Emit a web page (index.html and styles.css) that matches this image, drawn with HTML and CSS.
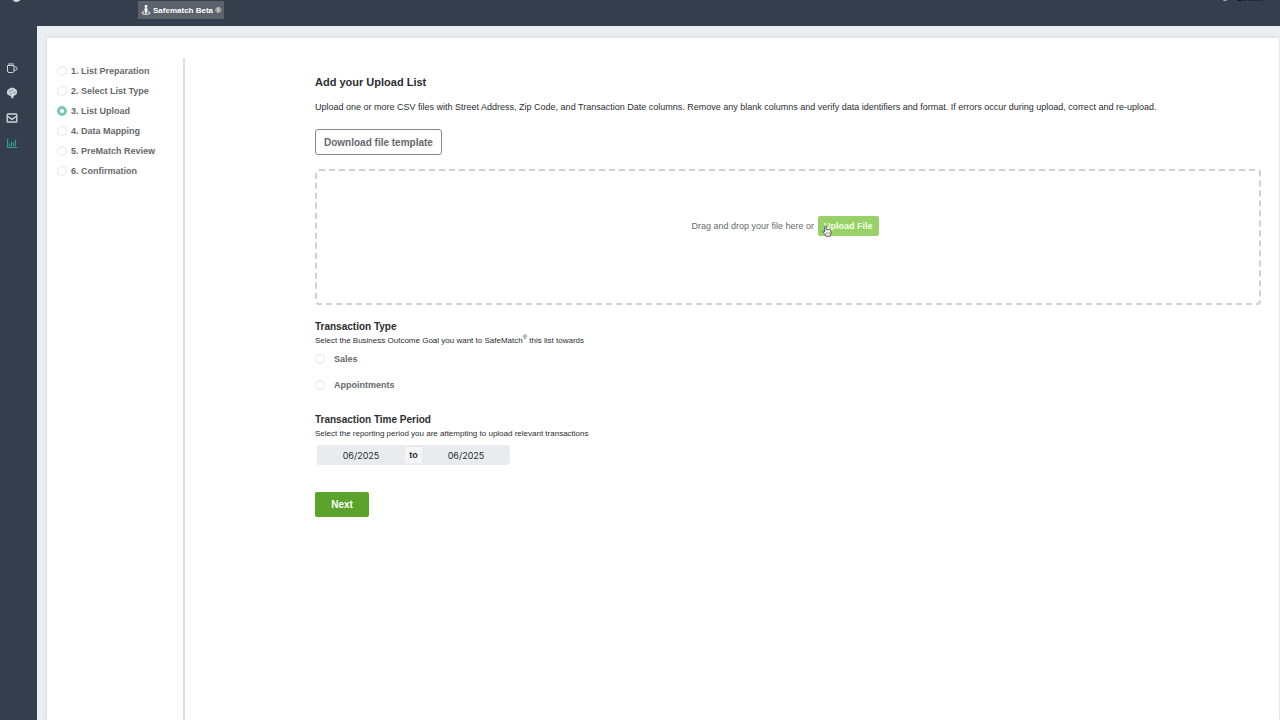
FILE: index.html
```
<!DOCTYPE html>
<html lang="en">
<head>
    <meta charset="UTF-8">
    <meta name="viewport" content="width=device-width, initial-scale=1.0">
    <title>Safematch - List Upload</title>
    <link rel="stylesheet" href="styles.css">
</head>
<body>
    <header class="topbar">
        <span class="brand-dot"></span>
        <a class="beta-link" href="#">
            <svg class="beta-icon" viewBox="0 0 12 12" aria-hidden="true">
                <circle cx="6" cy="1.800" r="1.700" fill="currentColor"/>
                <path d="M4.200 4h3.600v3L7.200 7.400V10H4.800V7.400L4.200 7z" fill="currentColor"/>
                <path d="M3.800 8C2 8.300 1 8.900 1 9.500 1 10.500 3.200 11.200 6 11.200s5-.7 5-1.700c0-.6-1-1.200-2.800-1.500" fill="none" stroke="currentColor" stroke-width="1.200"/>
            </svg>
            Safematch Beta ®
        </a>
        <div class="account">
            <span class="account-dot"></span>
            <span class="account-name">Brian</span>
        </div>
    </header>

    <div class="layout">
        <nav class="sidebar" aria-label="Main">
            <a href="#" aria-label="Home">
                <svg viewBox="0 0 12 12" aria-hidden="true">
                    <path d="M1.500 3.500h6.500v5.500q0 1.500-1.500 1.500h-3.500q-1.500 0-1.500-1.500zM8 4.800h1.500q1.500 0 1.500 1.400v.6q0 1.400-1.500 1.400H8M3 1v2M5 .8v2.200M7 1v2" fill="none" stroke="currentColor"/>
                </svg>
            </a>
            <a href="#" aria-label="Insights">
                <svg viewBox="0 0 12 12" aria-hidden="true">
                    <path d="M6 .8c1.500-.2 2.500.3 3.200 1.300C10.600 2.500 11.300 4 11 5.300c.2 1.700-.9 2.700-2.200 2.900L7.400 9.500v1.700H5.200V9.400L3 8.300C1.500 8 .8 6.800 1 5.400.8 3.700 1.600 2.500 3 2.100 3.700 1.200 4.700.6 6 .8z" fill="currentColor"/>
                    <path d="M3 4.500l2-.8M6.500 2.500v1.300M7.500 5.500h1.800M4 7h1.500" fill="none" stroke="#343e4d" stroke-width=".6"/>
                </svg>
            </a>
            <a href="#" aria-label="Messages">
                <svg viewBox="0 0 12 12" aria-hidden="true">
                    <rect x="1.200" y="2" width="9.600" height="8" rx=".8" fill="none" stroke="currentColor" stroke-width="1.400"/>
                    <path d="M1.500 4.200L6 7.400l4.500-3.200" fill="none" stroke="currentColor" stroke-width="1.400"/>
                </svg>
            </a>
            <a class="active" href="#" aria-label="Reports">
                <svg viewBox="0 0 12 12" aria-hidden="true">
                    <path d="M1.500 2v8.500h10M3.500 6.500v3M5.500 4.500v5M7.500 5.500v4M9.500 2.500v7" fill="none" stroke="currentColor" stroke-width="1.200"/>
                </svg>
            </a>
        </nav>

        <main class="card">
            <ol class="steps">
                <li><label><input type="radio" name="step"> 1. List Preparation</label></li>
                <li><label><input type="radio" name="step"> 2. Select List Type</label></li>
                <li><label><input type="radio" name="step" checked> 3. List Upload</label></li>
                <li><label><input type="radio" name="step"> 4. Data Mapping</label></li>
                <li><label><input type="radio" name="step"> 5. PreMatch Review</label></li>
                <li><label><input type="radio" name="step"> 6. Confirmation</label></li>
            </ol>

            <form class="upload-form">
                <h1>Add your Upload List</h1>
                <p class="intro">Upload one or more CSV files with Street Address, Zip Code, and Transaction Date columns. Remove any blank columns and verify data identifiers and format. If errors occur during upload, correct and re-upload.</p>
                <button class="btn-template" type="button">Download file template</button>

                <div class="dropzone">
                    <span>Drag and drop your file here or</span>
                    <button class="btn-upload" type="button">
                        Upload File
                        <svg class="pointer" viewBox="0 0 12 14" aria-hidden="true">
                            <path d="M3.200 7V2q0-1 .9-1t.9 1v3.500q.8-.8 1.500 0 .9-.6 1.500.2 1-.5 1.500.5 1.300-.3 1.300 1V9.500q0 1.500-1 2.500v1.300H4.600V12L1.200 8.300q-.6-.9.2-1.300.8-.3 1.800 1z" fill="#fff" stroke="#3a4048" stroke-linejoin="round"/>
                            <path d="M5.500 8.500v2.500M7.200 8.500v2.500M8.800 8.500v2.500" stroke="#3a4048" stroke-width=".6"/>
                        </svg>
                    </button>
                </div>

                <fieldset class="type-group">
                    <legend>Transaction Type</legend>
                    <p class="hint">Select the Business Outcome Goal you want to SafeMatch<sup>®</sup> this list towards</p>
                    <label><input type="radio" name="type"> Sales</label>
                    <label><input type="radio" name="type"> Appointments</label>
                </fieldset>

                <fieldset class="period-group">
                    <legend>Transaction Time Period</legend>
                    <p class="hint">Select the reporting period you are attempting to upload relevant transactions</p>
                    <div class="period">
                        <input type="text" value="06/2025" aria-label="Start month">
                        <span>to</span>
                        <input type="text" value="06/2025" aria-label="End month">
                    </div>
                </fieldset>

                <button class="btn-next" type="submit">Next</button>
            </form>
        </main>
    </div>
</body>
</html>
```
FILE: styles.css
```
:root {
    --navy: #343e4d;
    --page-bg: #ebeff1;
    --text-dark: #2b2d30;
    --text-grey: #66696c;
    --green: #5ba32b;
    --green-light: #98d168;
    --teal: #2f9c8a;
}

* {
    margin: 0;
    padding: 0;
    box-sizing: border-box;
}

body {
    display: flex;
    flex-direction: column;
    height: 100vh;
    overflow: hidden;
    background: var(--page-bg);
    color: var(--text-dark);
    font-family: "Liberation Sans", Arial, sans-serif;
    font-size: 9px;
}

button,
input {
    font-family: inherit;
}

/* Top bar */
.topbar {
    display: flex;
    align-items: flex-start;
    height: 26px;
    padding: 0 18px 0 12px;
    overflow: hidden;
    background: var(--navy);
}

.brand-dot {
    width: 9px;
    height: 9px;
    margin: -7px 117px 0 0;
    border: 2px solid #ccd3da;
    border-radius: 50%;
}

.beta-link {
    display: flex;
    align-items: center;
    gap: 2px;
    height: 18px;
    margin-top: 1px;
    padding: 0 3px;
    background: #5b626c;
    color: #fff;
    font-size: 8px;
    font-weight: bold;
    text-decoration: none;
    white-space: nowrap;
}

.beta-icon {
    width: 10px;
    height: 12px;
}

.account {
    display: flex;
    gap: 8px;
    margin: -7px 0 0 auto;
    color: #171d26;
    font-size: 10px;
    font-weight: bold;
    line-height: 10px;
}

.account-dot {
    width: 6px;
    height: 8px;
    border-radius: 50%;
    background: #aab2bb;
}

/* Layout */
.layout {
    display: flex;
    flex: 1;
    min-height: 0;
}

.sidebar {
    display: flex;
    flex-direction: column;
    gap: 13px;
    width: 37px;
    padding: 36px 6px;
    background: var(--navy);
}

.sidebar a {
    height: 12px;
    color: #cdd4dc;
}

.sidebar .active {
    color: var(--teal);
}

.sidebar svg {
    display: block;
    width: 12px;
    height: 12px;
}

.card {
    display: flex;
    flex: 1;
    margin: 12px 1px 0 10px;
    background: #fff;
    box-shadow: 0 0 4px rgba(60, 70, 80, 0.15);
}

/* Steps */
.steps {
    display: flex;
    flex-direction: column;
    gap: 4px;
    width: 138px;
    margin-top: 20px;
    padding: 5px 0 0 10px;
    border-right: 2px solid #dcdfe1;
    color: var(--text-grey);
    font-weight: bold;
    list-style: none;
}

.steps label {
    display: flex;
    align-items: center;
    gap: 4px;
    height: 16px;
}

input[type="radio"] {
    appearance: none;
    width: 10px;
    height: 10px;
    border: 1px solid #e4e8ea;
    border-radius: 50%;
    background: #fff;
}

input[type="radio"]:checked {
    border: 3px solid #7bc5b8;
}

/* Upload form */
.upload-form {
    flex: 1;
    min-width: 0;
    padding: 36px 18px 0 130px;
}

h1 {
    font-size: 11px;
    line-height: 16px;
}

.intro {
    margin-top: 10px;
    line-height: 14px;
}

.btn-template {
    display: block;
    height: 26px;
    margin-top: 15px;
    padding: 0 8px;
    border: 1px solid #85888a;
    border-radius: 3px;
    background: #fff;
    color: var(--text-grey);
    font-size: 10px;
    font-weight: bold;
}

.dropzone {
    display: flex;
    align-items: flex-start;
    justify-content: center;
    gap: 4px;
    height: 136px;
    margin-top: 14px;
    padding: 45px 6px 0 0;
    border: 2px dashed #d0d0d0;
    border-radius: 4px;
    color: var(--text-grey);
    line-height: 20px;
}

.btn-upload {
    position: relative;
    height: 20px;
    padding: 0 6px;
    border: 0;
    border-radius: 2px;
    background: var(--green-light);
    color: #f4ffe9;
    font-size: 9px;
    font-weight: bold;
}

.pointer {
    position: absolute;
    top: 9px;
    left: 4px;
    width: 10px;
    height: 12px;
}

fieldset {
    border: 0;
}

legend {
    font-size: 10px;
    font-weight: bold;
    line-height: 14px;
}

.hint {
    font-size: 8px;
    line-height: 13px;
}

.hint sup {
    font-size: 6px;
    line-height: 0;
}

.type-group {
    margin-top: 15px;
}

.type-group label {
    display: flex;
    align-items: center;
    gap: 9px;
    height: 16px;
    margin-top: 4px;
    color: var(--text-grey);
    font-weight: bold;
}

.type-group label + label {
    margin-top: 10px;
}

.period-group {
    margin-top: 20px;
}

.period {
    display: flex;
    align-items: center;
    width: 193px;
    height: 20px;
    margin: 5px 0 0 2px;
    border-radius: 2px;
    background: #e9ecee;
}

.period input {
    width: 88px;
    height: 20px;
    border: 0;
    background: transparent;
    color: var(--text-dark);
    font-family: Inter, sans-serif;
    font-size: 9px;
    text-align: center;
}

.period span {
    width: 17px;
    background: #f4f6f7;
    font-weight: bold;
    line-height: 16px;
    text-align: center;
}

.btn-next {
    display: block;
    width: 54px;
    height: 25px;
    margin-top: 27px;
    border: 0;
    border-radius: 2px;
    background: var(--green);
    color: #fff;
    font-size: 10px;
    font-weight: bold;
}
```
